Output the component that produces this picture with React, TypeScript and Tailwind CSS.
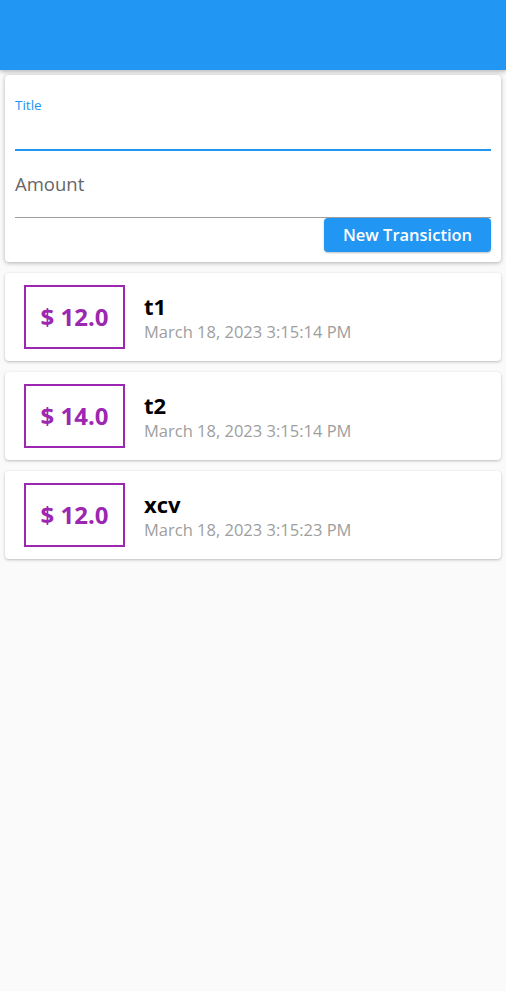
import React from 'react';

interface Tx {
  id: string;
  title: string;
  amount: number;
  date: string;
}

const txs: Tx[] = [
  { id: 'a', title: 't1', amount: 12, date: 'March 18, 2023 3:15:14 PM' },
  { id: 'b', title: 't2', amount: 14, date: 'March 18, 2023 3:15:14 PM' },
  { id: 'c', title: 'xcv', amount: 12, date: 'March 18, 2023 3:15:23 PM' },
];

const font = { fontFamily: '"Open Sans", "Noto Sans", sans-serif' };

export default function App() {
  return (
    <div className="min-h-[991px] bg-[#fafafa]" style={font}>
      <div className="h-[70px] bg-[#2196f3] shadow-[0_2px_4px_rgba(0,0,0,0.25)]" />

      <div className="mx-[5px] mt-[5px] rounded-[4px] bg-white px-[10px] pb-[10px] shadow-[0_1px_4px_rgba(0,0,0,0.3)]">
        <div className="pt-[22px]">
          <div className="text-[13.5px] leading-[16px] text-[#2196f3]">Title</div>
          <div className="h-[38px] border-b-2 border-[#2196f3]" />
        </div>
        <div className="pt-[22px]">
          <div className="text-[18.5px] leading-[22px] text-[#666666]">Amount</div>
          <div className="h-[23px] border-b border-[#9e9e9e]" />
        </div>
        <div className="flex justify-end">
          <button className="h-[34px] w-[167px] rounded-[4px] bg-[#2196f3] text-[16.5px] font-semibold text-white shadow-[0_1px_2px_rgba(0,0,0,0.25)]">
            New Transiction
          </button>
        </div>
      </div>

      <div className="mt-[11px] flex flex-col gap-[11px]">
        {txs.map((t) => (
          <div
            key={t.id}
            className="mx-[5px] flex h-[88px] items-center rounded-[4px] bg-white shadow-[0_1px_3px_rgba(0,0,0,0.25)]"
          >
            <div className="ml-[19px] flex h-[64px] w-[101px] items-center justify-center border-2 border-[#9c27b0]">
              <span className="text-[24px] font-bold text-[#9c27b0]">$ {t.amount.toFixed(1)}</span>
            </div>
            <div className="ml-[19px] flex flex-col pt-[2px]">
              <span className="text-[22px] font-bold leading-[26px] text-black">{t.title}</span>
              <span className="mt-[2px] text-[16.5px] leading-[22px] text-[#9e9e9e]">{t.date}</span>
            </div>
          </div>
        ))}
      </div>
    </div>
  );
}
